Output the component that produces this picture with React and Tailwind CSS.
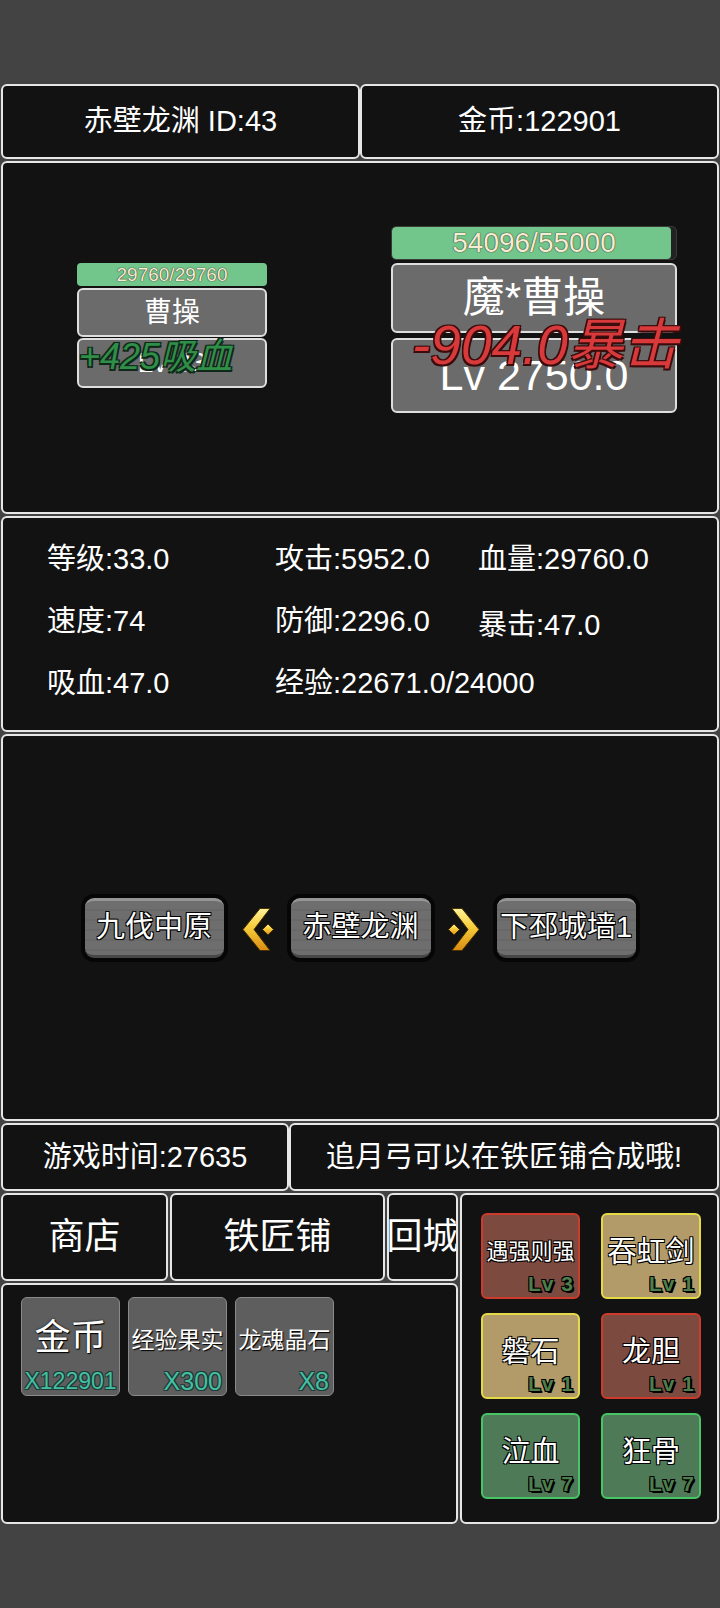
import React from "react";

const F = "font-['Liberation_Sans','Noto_Sans_CJK_SC',sans-serif]";
const box = "rounded-[6px] border-2 border-[#e6e6e6] bg-[#121212]";
const outline =
  "[text-shadow:1px_1px_0_#000,-1px_-1px_0_#000,1px_-1px_0_#000,-1px_1px_0_#000]";

function Arrow({ right }) {
  const id = right ? "ga-r" : "ga-l";
  return (
    <svg width="35" height="45" viewBox="0 0 35 44" className="shrink-0">
      <defs>
        <linearGradient id={id} x1="0" y1="0" x2="0" y2="1">
          <stop offset="0" stopColor="#fff39a" />
          <stop offset="0.45" stopColor="#f7cc3a" />
          <stop offset="1" stopColor="#d98c12" />
        </linearGradient>
      </defs>
      <g transform={right ? "translate(35 0) scale(-1 1)" : undefined}>
        <path
          d="M19 1 L29 1 L13 22 L29 43 L19 43 L2 22 Z"
          fill={`url(#${id})`}
          stroke="#4a3000"
          strokeWidth="1"
          strokeLinejoin="round"
        />
        <path
          d="M27 16.5 L32.5 22 L27 27.5 L21.5 22 Z"
          fill={`url(#${id})`}
          stroke="#4a3000"
          strokeWidth="1"
        />
      </g>
    </svg>
  );
}

function MapBtn({ children, w }) {
  return (
    <div
      className={`${w} h-[68px] shrink-0 rounded-[13px] bg-[#060606] p-[4px]`}
    >
      <div className="w-full h-full rounded-[9px] border-t-[3px] border-b-[3px] border-t-[#959595] border-b-[#474747] bg-[repeating-linear-gradient(180deg,#6e6e6e_0px,#6e6e6e_8px,#636363_9px,#6e6e6e_10px)] flex items-center justify-center">
        <span
          className={`text-[29px] leading-none text-white whitespace-nowrap ${outline}`}
        >
          {children}
        </span>
      </div>
    </div>
  );
}

function Item({ name, count, big }) {
  return (
    <div className="w-[99px] h-[99px] rounded-[6px] border-[1.5px] border-[#8a8a8a] bg-[#5e5e5e] flex flex-col">
      {big ? (
        <div
          className={`mt-[22px] h-[36px] flex items-center justify-center text-[36px] leading-none text-white [text-shadow:1px_1px_1px_#000,0_0_2px_#000]`}
        >
          {name}
        </div>
      ) : (
        <div
          className={`mt-[29px] h-[26px] flex items-center justify-center text-[23px] leading-none text-white whitespace-nowrap [text-shadow:1px_1px_1px_#000]`}
        >
          {name}
        </div>
      )}
      <div
        className={`${big ? "mt-[13px] justify-center text-[23px]" : "mt-[16px] justify-end pr-[4px] text-[25px]"} h-[24px] flex items-center leading-none text-[#43bfa4] [text-shadow:1px_1px_0_#1e3a34,-1px_-1px_0_#1e3a34,1px_-1px_0_#1e3a34,-1px_1px_0_#1e3a34]`}
      >
        {count}
      </div>
    </div>
  );
}

function Skill({ name, lv, kind, small }) {
  const c =
    kind === "red"
      ? "bg-[#7c4a3f] border-[#cc3b2b]"
      : kind === "yellow"
        ? "bg-[#b29b68] border-[#e4da48]"
        : "bg-[#4f7a57] border-[#46c466]";
  return (
    <div className={`h-[86px] rounded-[6px] border-2 ${c} flex flex-col`}>
      <div
        className={`mt-[22px] h-[30px] flex items-center justify-center leading-none text-white whitespace-nowrap ${small ? "text-[22px]" : "text-[29px]"} ${outline}`}
      >
        {name}
      </div>
      <div className="mt-auto self-end pr-[4px] pb-[3px] text-[21px] font-bold leading-none tracking-[1px] text-[#4d7e4d] [text-shadow:1px_1px_0_#000,-1px_-1px_0_#000,1px_-1px_0_#000,-1px_1px_0_#000,2px_2px_0_#000]">
        {lv}
      </div>
    </div>
  );
}

export default function App() {
  return (
    <div
      className={`${F} w-[720px] h-[1608px] bg-[#434343] flex flex-col pt-[84px] px-[1px] gap-[2px] text-white overflow-hidden`}
    >
      {/* header */}
      <div className="flex h-[75px] shrink-0">
        <div
          className={`${box} w-[359px] flex items-center justify-center text-[29px] leading-none`}
        >
          赤壁龙渊 ID:43
        </div>
        <div
          className={`${box} flex-1 flex items-center justify-center text-[29px] leading-none`}
        >
          金币:122901
        </div>
      </div>

      {/* battle */}
      <div className={`${box} relative h-[353px] shrink-0 flex items-start`}>
        {/* player */}
        <div className="ml-[74px] mt-[100px] w-[190px] flex flex-col">
          <div className="h-[23px] rounded-[4px] bg-[#72c58b] flex items-center justify-center text-[19px] leading-none text-[#f6ecd6] [text-shadow:0_0_1px_#3a3020,0_0_1px_#3a3020]">
            29760/29760
          </div>
          <div className="mt-[2px] h-[49px] rounded-[6px] border-2 border-[#dedede] bg-[#6b6b6b] flex items-center justify-center text-[28px] leading-none">
            曹操
          </div>
          <div className="mt-[1px] h-[50px] rounded-[6px] border-2 border-[#dedede] bg-[#6b6b6b] flex items-center justify-center text-[28px] leading-none">
            Lv 33
          </div>
        </div>
        {/* enemy */}
        <div className="ml-[124px] mt-[63px] w-[286px] flex flex-col">
          <div className="relative h-[34px] rounded-[5px] border border-[#3a3a3a] bg-[#222222] overflow-hidden">
            <div className="h-full w-[98.4%] rounded-[4px] bg-[#72c58b]" />
            <div className="absolute inset-0 flex items-center justify-center text-[28px] leading-none text-[#f6ecd6] [text-shadow:0_0_1px_#3a3020,0_0_1px_#3a3020]">
              54096/55000
            </div>
          </div>
          <div className="mt-[3px] h-[70px] rounded-[6px] border-2 border-[#dedede] bg-[#6b6b6b] flex items-center justify-center text-[42px] leading-none">
            魔*曹操
          </div>
          <div className="mt-[5px] h-[75px] rounded-[6px] border-2 border-[#dedede] bg-[#6b6b6b] flex items-center justify-center text-[43px] leading-none">
            Lv 2750.0
          </div>
        </div>
        {/* floating damage texts */}
        <div className="absolute left-[76px] top-[176px] text-[36px] leading-none italic whitespace-nowrap text-[#2f8f47] [text-shadow:1.5px_1.5px_0_#10281a,-1.5px_-1.5px_0_#10281a,1.5px_-1.5px_0_#10281a,-1.5px_1.5px_0_#10281a]">
          +425吸血
        </div>
        <div className="absolute left-[409px] top-[155px] text-[55px] leading-none italic whitespace-nowrap text-[#d83a3c] [text-shadow:1.5px_1.5px_0_#3a0c0c,-1.5px_-1.5px_0_#3a0c0c,1.5px_-1.5px_0_#3a0c0c,-1.5px_1.5px_0_#3a0c0c]">
          -904.0暴击
        </div>
      </div>

      {/* stats */}
      <div
        className={`${box} h-[216px] shrink-0 pl-[44px] pt-[10px] grid grid-cols-[228px_203px_1fr] auto-rows-[62px] items-center text-[29px] leading-none`}
      >
        <div>等级:33.0</div>
        <div>攻击:5952.0</div>
        <div>血量:29760.0</div>
        <div>速度:74</div>
        <div>防御:2296.0</div>
        <div className="pt-[8px]">暴击:47.0</div>
        <div>吸血:47.0</div>
        <div className="col-span-2">经验:22671.0/24000</div>
      </div>

      {/* map */}
      <div
        className={`${box} h-[387px] shrink-0 flex items-center justify-center`}
      >
        <MapBtn w="w-[147px]">九伐中原</MapBtn>
        <div className="ml-[13px] mr-[11px] mt-[4px]">
          <Arrow />
        </div>
        <MapBtn w="w-[148px]">赤壁龙渊</MapBtn>
        <div className="ml-[11px] mr-[12px] mt-[4px]">
          <Arrow right />
        </div>
        <MapBtn w="w-[147px]">下邳城墙1</MapBtn>
      </div>

      {/* time row */}
      <div className="flex h-[68px] shrink-0">
        <div
          className={`${box} w-[288px] flex items-center justify-center text-[29px] leading-none`}
        >
          游戏时间:27635
        </div>
        <div
          className={`${box} flex-1 flex items-center justify-center text-[29px] leading-none whitespace-nowrap`}
        >
          追月弓可以在铁匠铺合成哦!
        </div>
      </div>

      {/* bottom */}
      <div className="flex h-[331px] shrink-0 gap-[2px]">
        <div className="w-[457px] flex flex-col gap-[2px]">
          <div className="h-[88px] flex gap-[2px]">
            <div
              className={`${box} w-[167px] flex items-center justify-center text-[36px] leading-none`}
            >
              商店
            </div>
            <div
              className={`${box} w-[215px] flex items-center justify-center text-[36px] leading-none`}
            >
              铁匠铺
            </div>
            <div
              className={`${box} flex-1 flex items-center justify-center text-[36px] leading-none whitespace-nowrap overflow-hidden`}
            >
              回城
            </div>
          </div>
          <div className={`${box} flex-1 flex items-start gap-[8px] pl-[18px] pt-[12px]`}>
            <Item name="金币" count="X122901" big />
            <Item name="经验果实" count="X300" />
            <Item name="龙魂晶石" count="X8" />
          </div>
        </div>
        <div
          className={`${box} flex-1 pl-[19px] pt-[18px] grid grid-cols-[99px_100px] auto-rows-[86px] gap-x-[21px] gap-y-[14px] content-start`}
        >
          <Skill name="遇强则强" lv="Lv 3" kind="red" small />
          <Skill name="吞虹剑" lv="Lv 1" kind="yellow" />
          <Skill name="磐石" lv="Lv 1" kind="yellow" />
          <Skill name="龙胆" lv="Lv 1" kind="red" />
          <Skill name="泣血" lv="Lv 7" kind="green" />
          <Skill name="狂骨" lv="Lv 7" kind="green" />
        </div>
      </div>
    </div>
  );
}
